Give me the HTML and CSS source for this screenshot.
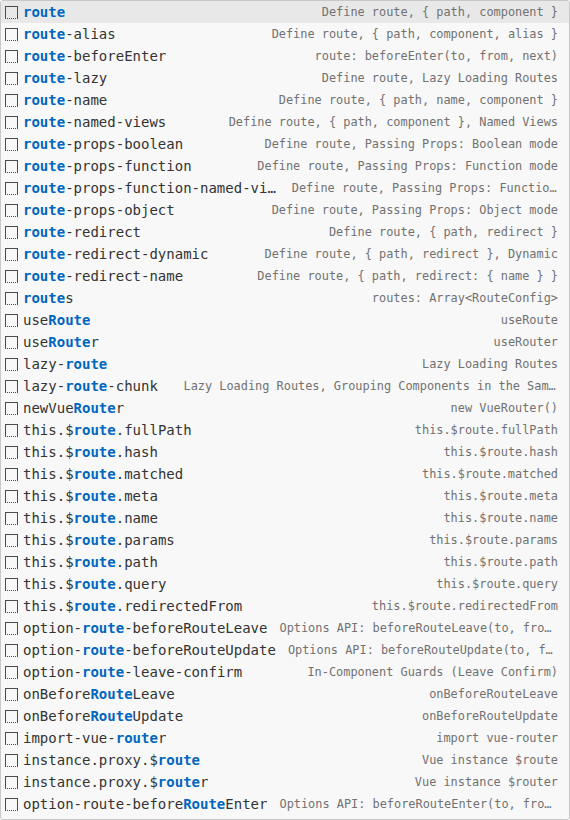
FILE: index.html
```html
<!DOCTYPE html>
<html>
<head>
<meta charset="utf-8">
<link rel="stylesheet" href="styles.css">
</head>
<body>
<div class="suggest">
  <div class="row selected"><span class="icon"></span><div class="main"><span class="label"><b>route</b></span><span class="detail">Define route, { path, component }</span></div></div>
  <div class="row"><span class="icon"></span><div class="main"><span class="label"><b>route</b>-alias</span><span class="detail">Define route, { path, component, alias }</span></div></div>
  <div class="row"><span class="icon"></span><div class="main"><span class="label"><b>route</b>-beforeEnter</span><span class="detail">route: beforeEnter(to, from, next)</span></div></div>
  <div class="row"><span class="icon"></span><div class="main"><span class="label"><b>route</b>-lazy</span><span class="detail">Define route, Lazy Loading Routes</span></div></div>
  <div class="row"><span class="icon"></span><div class="main"><span class="label"><b>route</b>-name</span><span class="detail">Define route, { path, name, component }</span></div></div>
  <div class="row"><span class="icon"></span><div class="main"><span class="label"><b>route</b>-named-views</span><span class="detail">Define route, { path, component }, Named Views</span></div></div>
  <div class="row"><span class="icon"></span><div class="main"><span class="label"><b>route</b>-props-boolean</span><span class="detail">Define route, Passing Props: Boolean mode</span></div></div>
  <div class="row"><span class="icon"></span><div class="main"><span class="label"><b>route</b>-props-function</span><span class="detail">Define route, Passing Props: Function mode</span></div></div>
  <div class="row"><span class="icon"></span><div class="main"><span class="label"><b>route</b>-props-function-named-views</span><span class="detail">Define route, Passing Props: Function mode, Named Views</span></div></div>
  <div class="row"><span class="icon"></span><div class="main"><span class="label"><b>route</b>-props-object</span><span class="detail">Define route, Passing Props: Object mode</span></div></div>
  <div class="row"><span class="icon"></span><div class="main"><span class="label"><b>route</b>-redirect</span><span class="detail">Define route, { path, redirect }</span></div></div>
  <div class="row"><span class="icon"></span><div class="main"><span class="label"><b>route</b>-redirect-dynamic</span><span class="detail">Define route, { path, redirect }, Dynamic</span></div></div>
  <div class="row"><span class="icon"></span><div class="main"><span class="label"><b>route</b>-redirect-name</span><span class="detail">Define route, { path, redirect: { name } }</span></div></div>
  <div class="row"><span class="icon"></span><div class="main"><span class="label"><b>route</b>s</span><span class="detail">routes: Array&lt;RouteConfig&gt;</span></div></div>
  <div class="row"><span class="icon"></span><div class="main"><span class="label">use<b>Route</b></span><span class="detail">useRoute</span></div></div>
  <div class="row"><span class="icon"></span><div class="main"><span class="label">use<b>Route</b>r</span><span class="detail">useRouter</span></div></div>
  <div class="row"><span class="icon"></span><div class="main"><span class="label">lazy-<b>route</b></span><span class="detail">Lazy Loading Routes</span></div></div>
  <div class="row"><span class="icon"></span><div class="main"><span class="label">lazy-<b>route</b>-chunk</span><span class="detail">Lazy Loading Routes, Grouping Components in the Same Chunk</span></div></div>
  <div class="row"><span class="icon"></span><div class="main"><span class="label">newVue<b>Route</b>r</span><span class="detail">new VueRouter()</span></div></div>
  <div class="row"><span class="icon"></span><div class="main"><span class="label">this.$<b>route</b>.fullPath</span><span class="detail">this.$route.fullPath</span></div></div>
  <div class="row"><span class="icon"></span><div class="main"><span class="label">this.$<b>route</b>.hash</span><span class="detail">this.$route.hash</span></div></div>
  <div class="row"><span class="icon"></span><div class="main"><span class="label">this.$<b>route</b>.matched</span><span class="detail">this.$route.matched</span></div></div>
  <div class="row"><span class="icon"></span><div class="main"><span class="label">this.$<b>route</b>.meta</span><span class="detail">this.$route.meta</span></div></div>
  <div class="row"><span class="icon"></span><div class="main"><span class="label">this.$<b>route</b>.name</span><span class="detail">this.$route.name</span></div></div>
  <div class="row"><span class="icon"></span><div class="main"><span class="label">this.$<b>route</b>.params</span><span class="detail">this.$route.params</span></div></div>
  <div class="row"><span class="icon"></span><div class="main"><span class="label">this.$<b>route</b>.path</span><span class="detail">this.$route.path</span></div></div>
  <div class="row"><span class="icon"></span><div class="main"><span class="label">this.$<b>route</b>.query</span><span class="detail">this.$route.query</span></div></div>
  <div class="row"><span class="icon"></span><div class="main"><span class="label">this.$<b>route</b>.redirectedFrom</span><span class="detail">this.$route.redirectedFrom</span></div></div>
  <div class="row"><span class="icon"></span><div class="main"><span class="label">option-<b>route</b>-beforeRouteLeave</span><span class="detail">Options API: beforeRouteLeave(to, from, next)</span></div></div>
  <div class="row"><span class="icon"></span><div class="main"><span class="label">option-<b>route</b>-beforeRouteUpdate</span><span class="detail">Options API: beforeRouteUpdate(to, from, next)</span></div></div>
  <div class="row"><span class="icon"></span><div class="main"><span class="label">option-<b>route</b>-leave-confirm</span><span class="detail">In-Component Guards (Leave Confirm)</span></div></div>
  <div class="row"><span class="icon"></span><div class="main"><span class="label">onBefore<b>Route</b>Leave</span><span class="detail">onBeforeRouteLeave</span></div></div>
  <div class="row"><span class="icon"></span><div class="main"><span class="label">onBefore<b>Route</b>Update</span><span class="detail">onBeforeRouteUpdate</span></div></div>
  <div class="row"><span class="icon"></span><div class="main"><span class="label">import-vue-<b>route</b>r</span><span class="detail">import vue-router</span></div></div>
  <div class="row"><span class="icon"></span><div class="main"><span class="label">instance.proxy.$<b>route</b></span><span class="detail">Vue instance $route</span></div></div>
  <div class="row"><span class="icon"></span><div class="main"><span class="label">instance.proxy.$<b>route</b>r</span><span class="detail">Vue instance $router</span></div></div>
  <div class="row"><span class="icon"></span><div class="main"><span class="label">option-route-before<b>Route</b>Enter</span><span class="detail">Options API: beforeRouteEnter(to, from, next)</span></div></div>
</div>
</body>
</html>
```
FILE: styles.css
```css
html, body {
  margin: 0;
  padding: 0;
  background: #ffffff;
}
.suggest {
  box-sizing: border-box;
  width: 570px;
  height: 820px;
  border: 1px solid #c8c8c8;
  border-radius: 3px;
  background: #f8f8f8;
  overflow: hidden;
  font-family: "DejaVu Sans Mono", monospace;
}
.row {
  display: flex;
  align-items: center;
  height: 22px;
  padding: 0 11px 0 4px;
  white-space: pre;
}
.row.selected {
  background: #e8e8e8;
}
.icon {
  flex: 0 0 13px;
  width: 13px;
  height: 13px;
  margin-right: 5px;
  box-sizing: border-box;
  border: 1px solid #4b4b4b;
  border-bottom: 1px dotted #4b4b4b;
}
.main {
  flex: 1 1 auto;
  min-width: 0;
  display: flex;
  align-items: center;
}
.label {
  flex: 0 0 auto;
  max-width: 48%;
  overflow: hidden;
  text-overflow: ellipsis;
  font-size: 14px;
  line-height: 22px;
  color: #333333;
}
.label b {
  color: #0066bf;
  font-weight: bold;
}
.detail {
  flex: 0 1 auto;
  min-width: 0;
  max-width: 70%;
  margin-left: auto;
  padding-left: 12px;
  overflow: hidden;
  text-overflow: ellipsis;
  font-size: 11.9px;
  line-height: 22px;
  color: #717171;
  text-align: right;
}
```
